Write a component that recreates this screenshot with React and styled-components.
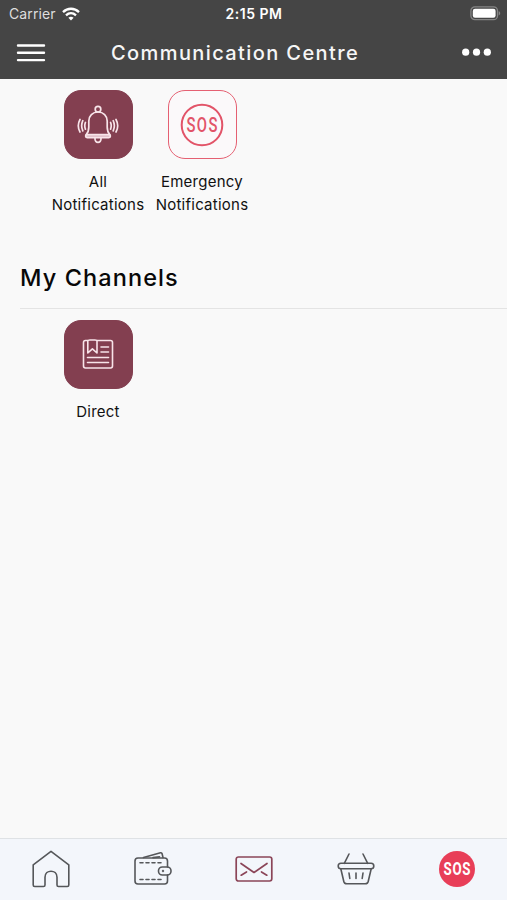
import React from "react";
import styled, { createGlobalStyle } from "styled-components";

const GlobalStyle = createGlobalStyle`
  * {
    box-sizing: border-box;
  }

  body {
    margin: 0;
    font-family: Inter, "Liberation Sans", sans-serif;
    color: #111;
  }
`;

const Screen = styled.div`
  display: flex;
  flex-direction: column;
  height: 900px;
  width: 507px;
  overflow: hidden;
  background-color: #f9f9f9;
`;

const Header = styled.header`
  height: 79px;
  background-color: #454545;
  color: #fff;
`;

const StatusBar = styled.div`
  display: grid;
  grid-template-columns: 1fr auto 1fr;
  align-items: center;
  height: 27px;
  padding: 0 6px 0 9px;
`;

const Carrier = styled.div`
  display: flex;
  align-items: center;
  gap: 6px;
  font-size: 14px;
  letter-spacing: 0.1px;
  color: #dedede;
`;

const Clock = styled.div`
  margin-right: 2px;
  font-size: 14px;
  font-weight: 600;
  letter-spacing: 0.5px;
`;

const Battery = styled.svg`
  justify-self: end;
`;

const NavBar = styled.div`
  display: flex;
  align-items: center;
  height: 51px;
  padding: 0 16px;
`;

const Title = styled.h1`
  margin: 0 auto 0 65px;
  font-size: 20px;
  font-weight: 500;
  letter-spacing: 1.4px;
  line-height: 28px;
  color: #f6f6f6;
  white-space: nowrap;
`;

const NavButton = styled.button`
  display: flex;
  padding: 0;
  border: 0;
  background: none;
`;

const Content = styled.main`
  flex: 1;
  padding-top: 11px;
`;

const Tiles = styled.div`
  display: flex;
  padding-left: 46px;
`;

const Tile = styled.div`
  display: flex;
  flex-direction: column;
  align-items: center;
  width: 104px;
`;

const TileIcon = styled.div`
  display: flex;
  align-items: center;
  justify-content: center;
  width: 69px;
  height: 69px;
  border-radius: 17px;
  border: 1.5px solid ${(props) => (props.$outlined ? "#e56072" : "#833f50")};
  background-color: ${(props) => (props.$outlined ? "#fbf9fa" : "#833f50")};
`;

const TileLabel = styled.div`
  margin-top: 11px;
  font-size: 15px;
  line-height: 23px;
  letter-spacing: 0.25px;
  text-align: center;
`;

const SectionTitle = styled.h2`
  margin: 45px 0 11px 20px;
  padding: 1px 0 14px;
  border-bottom: 1px solid #e4e4e4;
  font-size: 23.5px;
  font-weight: 500;
  line-height: 32px;
  letter-spacing: 1.1px;
  color: #080808;
`;

const TabBar = styled.nav`
  display: grid;
  grid-template-columns: repeat(5, 101.5px);
  height: 62px;
  padding: 0 0 2px 0.3px;
  border-top: 1px solid #dfe2e5;
  background-color: #f3f6fb;
`;

const Tab = styled.button`
  display: flex;
  align-items: center;
  justify-content: center;
  padding: 0;
  border: 0;
  background: none;
  color: ${(props) => (props.$active ? "#8b4558" : "#55575a")};
`;

const LineIcon = styled.svg`
  fill: none;
  stroke: currentColor;
  stroke-width: ${(props) => props.$weight || 1.4};
  stroke-linecap: round;
  stroke-linejoin: round;
`;

const SosIcon = styled.svg`
  overflow: visible;
`;

const SosText = styled.text`
  font-family: Roboto, sans-serif;
  font-weight: ${(props) => props.$weight};
  letter-spacing: ${(props) => props.$spacing};
  text-anchor: middle;
  stroke: none;
`;

const WifiIcon = () => (
  <svg width="18" height="14" viewBox="0 0 18 14" fill="none" stroke="#fff" strokeWidth="2.3">
    <path d="M1 5.1C5.6.6 12.4.6 17 5.1" />
    <path d="M4 8.3c3-2.8 7-2.8 10 0" />
    <path d="M6.4 10.7c1.6-1.4 3.6-1.4 5.2 0L9 13.5z" fill="#fff" stroke="none" />
  </svg>
);

const BatteryIcon = () => (
  <Battery width="31" height="15" viewBox="0 0 31 15">
    <rect x="0.9" y="0.9" width="26.6" height="12.8" rx="4" fill="none" stroke="#858585" strokeWidth="1.3" />
    <rect x="2.8" y="2.8" width="22.8" height="9" rx="2.2" fill="#fff" />
    <path d="M28.7 5.2c2 .7 2 3.5 0 4.2z" fill="#858585" />
  </Battery>
);

const MenuIcon = () => (
  <svg width="30" height="20" viewBox="0 0 30 20" stroke="#fff" strokeWidth="2.4" strokeLinecap="round">
    <path d="M2 2.5h26M2 9.8h26M2 17.1h26" />
  </svg>
);

const MoreIcon = () => (
  <svg width="29" height="9" viewBox="0 0 29 9" fill="#fff">
    <circle cx="3.7" cy="4.2" r="3.6" />
    <circle cx="14.5" cy="4.2" r="3.6" />
    <circle cx="25.3" cy="4.2" r="3.6" />
  </svg>
);

const BellIcon = () => (
  <LineIcon width="42" height="42" viewBox="0 0 42 42" color="#f8e4e9" $weight={1.7}>
    <circle cx="21" cy="5.2" r="2.8" />
    <path d="M9.200 30.500C11.200 28.500 11.800 26.500 11.800 23V17C11.800 11.800 15.600 8 21 8S30.200 11.800 30.200 17V23C30.200 26.500 30.800 28.500 32.800 30.500" />
    <rect x="8.600" y="30.600" width="24.800" height="3" rx="1.5" fill="#dcb9c2" />
    <path d="M18 34.200c-.6 5.600 6.600 5.600 6 0" />
    <path d="M3 15.500c-2.200 4-2.200 8.500 0 12.500M5.800 16.700c-1.600 3.500-1.600 6.600 0 10.100M8.400 18.500c-.9 2.400-.9 4.300 0 6.600" />
    <path d="M39 15.500c2.200 4 2.200 8.500 0 12.500M36.200 16.700c1.600 3.500 1.600 6.600 0 10.100M33.600 18.500c.9 2.400.9 4.300 0 6.600" />
  </LineIcon>
);

const SosOutlineIcon = () => (
  <SosIcon width="44" height="44" viewBox="0 0 44 44">
    <circle cx="22" cy="22" r="20.3" fill="none" stroke="#e25468" strokeWidth="2" />
    <SosText transform="translate(22.6 28.9) scale(0.76 1)" fontSize="19.5" fill="#e25468" $weight={500} $spacing="1.8px">
      SOS
    </SosText>
  </SosIcon>
);

const ArticleIcon = () => (
  <LineIcon width="32" height="32" viewBox="0 1.5 32 32" color="#f8e4e9" $weight={1.6}>
    <path d="M5.500 3H3.400Q1.500 3 1.500 4.900V28.600Q1.500 30.500 3.400 30.500H28.600Q30.500 30.500 30.500 28.600V4.900Q30.500 3 28.600 3H15" />
    <path d="M5.800 15.500V3.500Q5.800 2.500 7.800 2.500H13Q15 2.500 15 3.500V15.500L10.400 11.300Z" />
    <path d="M19 9.500h7.500M19 14.500h7.500M5.500 20h21M5.500 25h21" />
  </LineIcon>
);

const HomeIcon = () => (
  <LineIcon width="40" height="40" viewBox="0 0 40 40" $weight={1.6}>
    <path d="M20 2.300L37.800 15.800V36Q37.800 37.500 36.300 37.500H27.500Q26 37.500 26 36V28.200C26 20.200 14 20.200 14 28.200V36Q14 37.500 12.500 37.500H3.700Q2.200 37.500 2.200 36V15.800Z" />
  </LineIcon>
);

const WalletIcon = () => (
  <LineIcon width="40" height="36" viewBox="0 0 40 36" $weight={1.6}>
    <path d="M34.500 16V10Q34.500 7 31.500 7H5Q2 7 2 10V30Q2 33 5 33H31.500Q34.500 33 34.500 30V24" />
    <path d="M10.500 6.500L27.500 1.800Q28.800 1.500 29.100 2.800L30 6.500M20 6.600l6.500-.7" />
    <rect x="25.500" y="16" width="12.500" height="8" rx="3.8" />
    <circle cx="30" cy="20" r="0.4" />
    <path d="M7 11.700h3M13 11.700h3M19 11.700h3M25 11.700h3M7 28.500h3M13 28.500h3M19 28.500h3M25 28.500h3" />
  </LineIcon>
);

const MailIcon = () => (
  <LineIcon width="38" height="28" viewBox="0 0 38 28" $weight={1.7}>
    <rect x="1.200" y="2" width="35.600" height="24" rx="2.200" />
    <path d="M6 8.500l13 9 13-9M6.200 20.200l5.300-3.200M31.800 20.200l-5.300-3.200" />
  </LineIcon>
);

const BasketIcon = () => (
  <LineIcon width="38" height="34" viewBox="0 0 38 34" $weight={1.6}>
    <path d="M12 2L7.300 11.300M26 2l4.700 9.300" />
    <rect x="1.200" y="11.300" width="35.600" height="5.400" rx="2.700" />
    <path d="M3.800 16.700L6.800 29.500Q7.400 31.800 9.800 31.800H28.200Q30.600 31.800 31.200 29.500L34.200 16.700M12 21l.8 5.500M19 21v5.500M26 21l-.8 5.500" />
  </LineIcon>
);

const SosFilledIcon = () => (
  <SosIcon width="38" height="38" viewBox="0 0 38 38">
    <circle cx="19" cy="19" r="18" fill="#e83e58" />
    <SosText transform="translate(19.3 25.4) scale(0.74 1)" fontSize="18" fill="#fff" $weight={700} $spacing="0.9px">
      SOS
    </SosText>
  </SosIcon>
);

function App() {
  return (
    <Screen>
      <GlobalStyle />
      <Header>
        <StatusBar>
          <Carrier>
            Carrier
            <WifiIcon />
          </Carrier>
          <Clock>2:15 PM</Clock>
          <BatteryIcon />
        </StatusBar>
        <NavBar>
          <NavButton aria-label="Menu">
            <MenuIcon />
          </NavButton>
          <Title>Communication Centre</Title>
          <NavButton aria-label="More">
            <MoreIcon />
          </NavButton>
        </NavBar>
      </Header>

      <Content>
        <Tiles>
          <Tile>
            <TileIcon>
              <BellIcon />
            </TileIcon>
            <TileLabel>
              All
              <br />
              Notifications
            </TileLabel>
          </Tile>
          <Tile>
            <TileIcon $outlined>
              <SosOutlineIcon />
            </TileIcon>
            <TileLabel>
              Emergency
              <br />
              Notifications
            </TileLabel>
          </Tile>
        </Tiles>

        <SectionTitle>My Channels</SectionTitle>

        <Tiles>
          <Tile>
            <TileIcon>
              <ArticleIcon />
            </TileIcon>
            <TileLabel>Direct</TileLabel>
          </Tile>
        </Tiles>
      </Content>

      <TabBar>
        <Tab aria-label="Home">
          <HomeIcon />
        </Tab>
        <Tab aria-label="Wallet">
          <WalletIcon />
        </Tab>
        <Tab aria-label="Messages" $active>
          <MailIcon />
        </Tab>
        <Tab aria-label="Basket">
          <BasketIcon />
        </Tab>
        <Tab aria-label="SOS">
          <SosFilledIcon />
        </Tab>
      </TabBar>
    </Screen>
  );
}

export default App;
